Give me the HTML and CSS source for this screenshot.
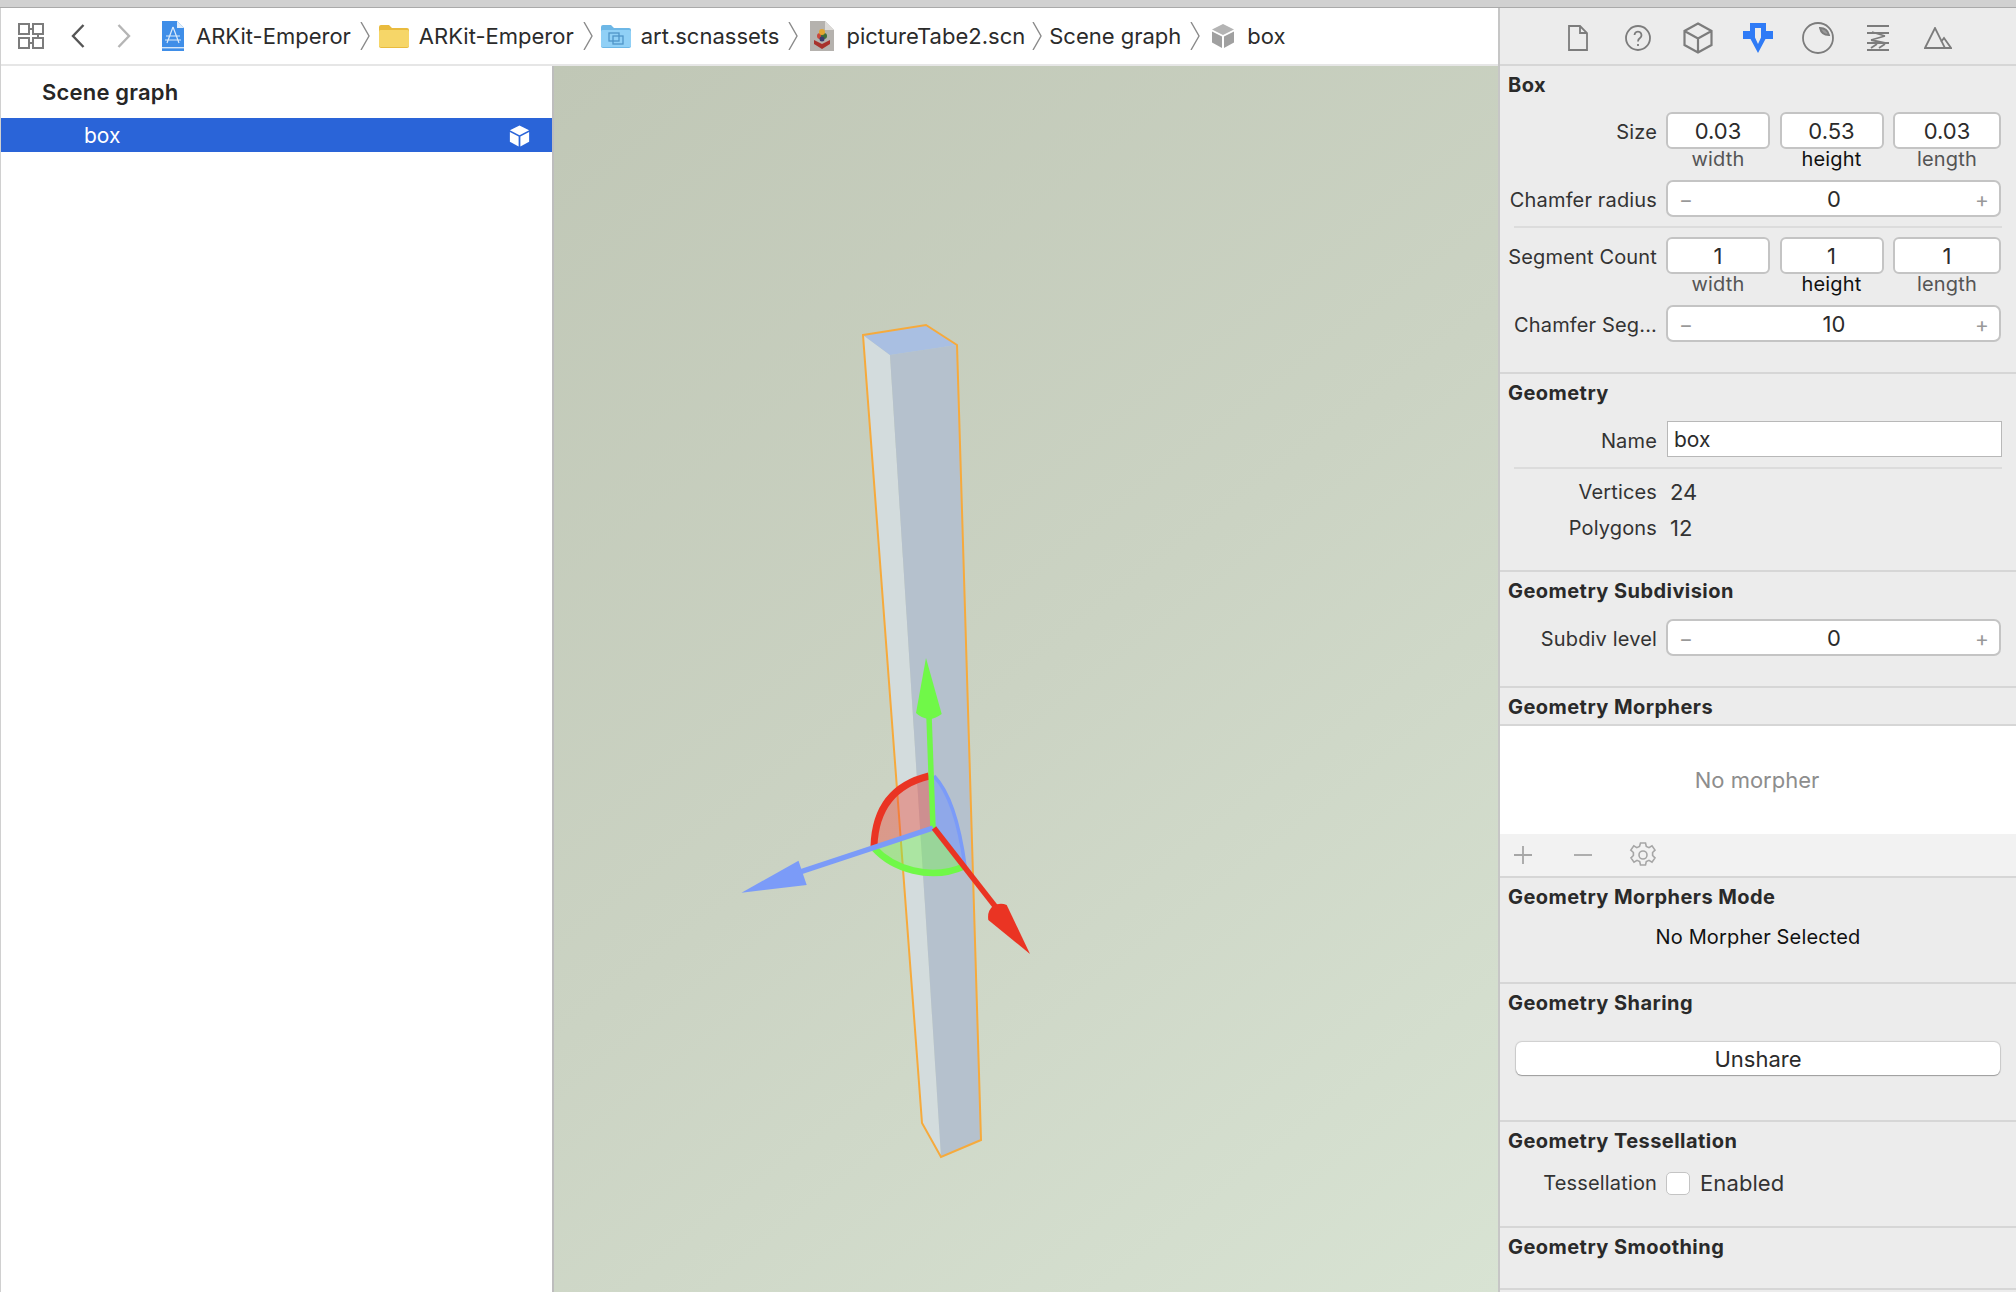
FILE: index.html
```html
<!DOCTYPE html>
<html lang="en">
<head>
<meta charset="utf-8">
<title>Scene editor</title>
<link rel="stylesheet" href="styles.css">
</head>
<body>
<div class="window">
  <div class="titlestrip"></div>
  <div class="body">
    <div class="editor">
      <div class="toolbar">
        <svg class="ic-grid" width="26" height="26" viewBox="0 0 26 26" fill="none" stroke="#7c7c7c" stroke-width="2"><rect x="1" y="1" width="10" height="10"/><rect x="15" y="1" width="10" height="10"/><rect x="1" y="15" width="10" height="10"/><rect x="15" y="15" width="10" height="10"/><path d="M11 6h5M20 11v5M15 20h-4"/></svg>
        <svg class="ic-back" width="14" height="24" viewBox="0 0 14 24" fill="none" stroke="#555" stroke-width="2.4"><path d="M12.5 1 2 12l10.5 11"/></svg>
        <svg class="ic-fwd" width="14" height="24" viewBox="0 0 14 24" fill="none" stroke="#b5b5b5" stroke-width="2.4"><path d="M1.5 1 12 12 1.5 23"/></svg>
        <nav class="crumbs">
          <svg class="ci-app" width="23" height="30" viewBox="0 0 23 30"><path d="M1 0h15l7 7v23H1z" fill="#3f8ee8"/><path d="M16 0l7 7h-7z" fill="#e4effa"/><path d="M1 26h22v1.4H1z" fill="#d5e6f8"/><path d="M12 6 6 22M12 6l6 16M5 15h14M4 19h16" stroke="#dcebfa" stroke-width="1.2" fill="none"/></svg>
          <span class="crumb-text">ARKit-Emperor</span>
          <svg class="sep" width="10" height="28" viewBox="0 0 10 28" fill="none" stroke="#8a8a8a" stroke-width="1.4"><path d="M1 0l8 14-8 14"/></svg>
          <svg class="ci-folder" width="30" height="24" viewBox="0 0 30 24"><path d="M0 3a2 2 0 0 1 2-2h8l3 3h15a2 2 0 0 1 2 2v16a2 2 0 0 1-2 2H2a2 2 0 0 1-2-2z" fill="#e9bb3e"/><rect y="6" width="30" height="17" rx="1.5" fill="#f6d668"/></svg>
          <span class="crumb-text">ARKit-Emperor</span>
          <svg class="sep" width="10" height="28" viewBox="0 0 10 28" fill="none" stroke="#8a8a8a" stroke-width="1.4"><path d="M1 0l8 14-8 14"/></svg>
          <svg class="ci-folder ci-folder-art" width="30" height="24" viewBox="0 0 30 24"><path d="M0 3a2 2 0 0 1 2-2h8l3 3h15a2 2 0 0 1 2 2v16a2 2 0 0 1-2 2H2a2 2 0 0 1-2-2z" fill="#6db7e6"/><rect y="6" width="30" height="17" rx="1.5" fill="#90d0f6"/><g fill="none" stroke="#4f94c8" stroke-width="1.3"><rect x="8" y="9" width="10" height="8"/><rect x="12" y="12" width="10" height="8"/></g></svg>
          <span class="crumb-text">art.scnassets</span>
          <svg class="sep" width="10" height="28" viewBox="0 0 10 28" fill="none" stroke="#8a8a8a" stroke-width="1.4"><path d="M1 0l8 14-8 14"/></svg>
          <svg class="ci-scn" width="24" height="30" viewBox="0 0 24 30"><path d="M0 0h15l9 9v21H0z" fill="#b5b2ae"/><path d="M15 0l9 9h-9z" fill="#dcdad7"/><path d="M4 19l8 4 8-4v4l-8 5-8-5z" fill="#a8322c"/><circle cx="10" cy="15" r="3" fill="#c9473d"/><circle cx="14" cy="15" r="3" fill="#3f6e3a"/><circle cx="12" cy="11" r="3" fill="#e2a52f"/><circle cx="12" cy="18" r="2.5" fill="#3b3a6d"/></svg>
          <span class="crumb-text">pictureTabe2.scn</span>
          <svg class="sep sep-tight" width="10" height="28" viewBox="0 0 10 28" fill="none" stroke="#8a8a8a" stroke-width="1.4"><path d="M1 0l8 14-8 14"/></svg>
          <span class="crumb-text crumb-plain">Scene graph</span>
          <svg class="sep" width="10" height="28" viewBox="0 0 10 28" fill="none" stroke="#8a8a8a" stroke-width="1.4"><path d="M1 0l8 14-8 14"/></svg>
          <svg class="ci-cube" width="24" height="24" viewBox="0 0 24 24"><path d="M12 0 23 5.5 12 11 1 5.5z" fill="#b4b4b4"/><path d="M1 7.5 11 12.5V24L1 18.5z" fill="#a0a0a0"/><path d="M23 7.5 13 12.5V24l10-5.5z" fill="#a0a0a0"/></svg>
          <span class="crumb-text">box</span>
        </nav>
      </div>
      <div class="split">
        <aside class="outline">
          <div class="outline-title">Scene graph</div>
          <div class="outline-row">
            <span>box</span>
            <svg width="21" height="22" viewBox="0 0 24 24"><path d="M12 0 23 5.5 12 11 1 5.5z" fill="#fff"/><path d="M1 7.5 11 12.5V24L1 18.5z" fill="#fff"/><path d="M23 7.5 13 12.5V24l10-5.5z" fill="#fff"/></svg>
          </div>
        </aside>
        <main class="viewport">
          <svg class="scene" viewBox="554 66 944 1226" width="944" height="1226">
            <polygon points="863,335 890,355 941,1157 922,1123" fill="#d3dcdd"/>
            <polygon points="890,355 957,345 981,1140 941,1157" fill="#b5c1cd"/>
            <polygon points="863,335 926,325 957,345 890,355" fill="#a9bfe2"/>
            <polygon points="863,335 926,325 957,345 981,1140 941,1157 922,1123" fill="none" stroke="#f6aa3c" stroke-width="2"/>
            <path d="M933 828 929 776Q876 789 874 846Z" fill="#ee4a3c" fill-opacity=".42"/>
            <path d="M933 828 874 848C892 868 930 882 965 866Z" fill="#70f24a" fill-opacity=".4"/>
            <path d="M933 828 934 776Q956 799 965 866Z" fill="#7b9bf8" fill-opacity=".65"/>
            <path d="M934 776Q956 799 965 866" fill="none" stroke="#7b9bf8" stroke-width="3.5"/>
            <path d="M874 848C892 868 930 882 965 866" fill="none" stroke="#70f848" stroke-width="6.5"/>
            <path d="M929 776Q876 789 874 846" fill="none" stroke="#ea3423" stroke-width="7"/>
            <path d="M933 828 929 716" stroke="#70f848" stroke-width="5.5"/>
            <path d="M926 658 941.700 714Q935 719 929 719 921 718 916 713Z" fill="#70f848"/>
            <path d="M933 828 800 872" stroke="#7b9bf8" stroke-width="5.5"/>
            <path d="M741.500 892.700 798.500 860.700 806.700 885Z" fill="#7b9bf8"/>
            <path d="M934 828 998 910" stroke="#ea3423" stroke-width="5.5"/>
            <path d="M1030 954 988.300 920Q987 911 993 906 1000 902 1006.700 905Z" fill="#ea3423"/>
          </svg>
        </main>
      </div>
    </div>

    <aside class="inspector">
      <div class="tabs">
        <svg width="20" height="26" viewBox="0 0 20 26" fill="none" stroke="#7c7c7c" stroke-width="1.8"><path d="M1 1h11l7 7v17H1zM12 1v7h7"/></svg>
        <svg width="26" height="26" viewBox="0 0 26 26" fill="none" stroke="#7c7c7c" stroke-width="1.8"><circle cx="13" cy="13" r="12"/><path d="M9.500 10a3.500 3.500 0 1 1 5.500 3c-1.500 1-2 1.500-2 3.500"/><path d="M13 19v2"/></svg>
        <svg width="30" height="32" viewBox="0 0 30 32" fill="none" stroke="#7c7c7c" stroke-width="2.200"><path d="M15 1.500 28.500 9v14L15 30.500 1.500 23V9zM1.500 9 15 16.500 28.500 9M15 16.500v14"/></svg>
        <svg width="30" height="30" viewBox="0 0 30 30"><path fill-rule="evenodd" d="M7 0h16v8h7v8h-7.500L15 30 7.500 16H0V8h7zM12 5v9.500L15 21l3-6.500V5z" fill="#2f7bf6"/></svg>
        <svg width="32" height="32" viewBox="0 0 32 32" fill="none" stroke="#7c7c7c" stroke-width="1.800"><circle cx="16" cy="16" r="15"/><path d="M18 6c5 0 8 3 9 7-5 0-8-2-9-7z" fill="#9a9a9a"/></svg>
        <svg width="22" height="26" viewBox="0 0 22 26" fill="none" stroke="#7c7c7c" stroke-width="1.800"><path d="M0 1h22M0 25h22M0 8h22M0 18h22M5 7l13 4M18 11 4 15M4 15l14 3M4 23l6-4M12 23l6-4"/></svg>
        <svg width="28" height="22" viewBox="0 0 28 22" fill="none" stroke="#7c7c7c" stroke-width="1.800"><path d="M1 21 11 1l10 20zM1 21h26l-7-10-3 4"/></svg>
      </div>

      <section class="sec sec-box">
        <h2>Box</h2>
        <div class="row row-size">
          <label>Size</label>
          <div class="triple">
            <div class="cell"><div class="num">0.03</div><small>width</small></div>
            <div class="cell"><div class="num">0.53</div><small class="on">height</small></div>
            <div class="cell"><div class="num">0.03</div><small>length</small></div>
          </div>
        </div>
        <div class="row row-chamfer">
          <label>Chamfer radius</label>
          <div class="stepper"><i>−</i><b>0</b><i>+</i></div>
        </div>
        <hr class="rule rule-a">
        <div class="row">
          <label>Segment Count</label>
          <div class="triple">
            <div class="cell"><div class="num">1</div><small>width</small></div>
            <div class="cell"><div class="num">1</div><small class="on">height</small></div>
            <div class="cell"><div class="num">1</div><small>length</small></div>
          </div>
        </div>
        <div class="row row-chamfer">
          <label>Chamfer Seg...</label>
          <div class="stepper"><i>−</i><b>10</b><i>+</i></div>
        </div>
      </section>

      <section class="sec sec-geo">
        <h2>Geometry</h2>
        <div class="row row-name">
          <label>Name</label>
          <div class="namefield">box</div>
        </div>
        <hr class="rule rule-b">
        <div class="row row-stat"><label>Vertices</label><span>24</span></div>
        <div class="row row-stat"><label>Polygons</label><span>12</span></div>
      </section>

      <section class="sec sec-sub">
        <h2>Geometry Subdivision</h2>
        <div class="row row-name">
          <label>Subdiv level</label>
          <div class="stepper"><i>−</i><b>0</b><i>+</i></div>
        </div>
      </section>

      <section class="sec sec-morph">
        <h2>Geometry Morphers</h2>
      </section>
      <div class="morph-list">No morpher</div>
      <div class="morph-tools">
        <svg width="20" height="20" viewBox="0 0 20 20" stroke="#a6a6a6" stroke-width="1.800"><path d="M10 1v18M1 10h18"/></svg>
        <svg width="20" height="20" viewBox="0 0 20 20" stroke="#a6a6a6" stroke-width="1.800"><path d="M1 10h18"/></svg>
        <svg width="28" height="28" viewBox="0 0 28 28" fill="none" stroke="#a6a6a6" stroke-width="1.600"><path d="M11.500 2h5l.8 3.500 2.700 1.200 3-1.800 3 4.200-2.400 2.400v3l2.400 2.400-3 4.200-3-1.800-2.700 1.200-.8 3.500h-5l-.8-3.500-2.700-1.200-3 1.800-3-4.200 2.400-2.400v-3L1.800 9.100l3-4.200 3 1.800 2.700-1.200z"/><circle cx="14" cy="14" r="4"/></svg>
      </div>

      <section class="sec sec-mode">
        <h2>Geometry Morphers Mode</h2>
        <p class="center-note">No Morpher Selected</p>
      </section>

      <section class="sec sec-share">
        <h2>Geometry Sharing</h2>
        <button class="btn">Unshare</button>
      </section>

      <section class="sec sec-tess">
        <h2>Geometry Tessellation</h2>
        <div class="row row-check">
          <label>Tessellation</label>
          <span class="checkbox"></span>
          <span class="check-label">Enabled</span>
        </div>
      </section>

      <section class="sec sec-smooth">
        <h2>Geometry Smoothing</h2>
      </section>
    </aside>
  </div>
</div>
</body>
</html>
```

FILE: styles.css
```css
* { box-sizing: border-box; }
html, body { margin: 0; height: 100%; }
body {
  width: 2016px;
  height: 1292px;
  overflow: hidden;
  font-family: Inter, "Liberation Sans", sans-serif;
  color: #2b2b2b;
  background: #ececec;
}
.window { display: flex; flex-direction: column; height: 1292px; }
.titlestrip { height: 8px; background: #d1d1d1; border-bottom: 1px solid #aaa; flex: none; }
.body { display: flex; flex: 1; min-height: 0; }

.editor { width: 1498px; display: flex; flex-direction: column; flex: none; border-left: 1px solid #d0d0d0; }
.toolbar {
  height: 58px;
  flex: none;
  background: #fff;
  border-bottom: 2px solid #e6e6e6;
  display: flex;
  align-items: center;
  padding-left: 17px;
}
.ic-back { margin-left: 27px; }
.ic-fwd { margin-left: 32px; }
.crumbs { display: flex; align-items: center; margin-left: 30px; }
.crumb-text { font-size: 22px; line-height: 28px; color: #2b2b2b; white-space: nowrap; margin-left: 12px; }
.ci-folder + .crumb-text { margin-left: 10px; }
.crumb-text.crumb-plain { margin-left: 7px; }
.sep { margin-left: 9px; flex: none; }
.sep.sep-tight { margin-left: 7px; }
.ci-folder { margin-left: 9px; flex: none; }
.ci-folder-art { margin-left: 8px; }
.ci-scn { margin-left: 12px; flex: none; }
.ci-cube { margin-left: 11px; flex: none; }
.ci-app { flex: none; }

.split { display: flex; flex: 1; min-height: 0; }
.outline { flex: none; background: #fff; border-right: 2px solid #bdbdbd; width: 553px; }
.outline-title { font-size: 22px; font-weight: 600; line-height: 28px; margin: 12px 0 12px 41px; color: #262626; letter-spacing: 0.2px; }
.outline-row {
  height: 34px;
  background: #2a64d8;
  color: #fff;
  font-size: 21px;
  display: flex;
  align-items: center;
  justify-content: space-between;
  padding: 1px 22px 0 83px;
}
.viewport {
  flex: 1;
  min-width: 0;
  background: linear-gradient(142deg, #c0c7b6 0%, #cbd3c3 50%, #d8e3d3 100%);
  overflow: hidden;
}
.scene { display: block; }

.inspector { flex: 1; min-width: 0; border-left: 2px solid #c6c6c6; background: #ececec; display: flex; flex-direction: column; }
.tabs {
  height: 58px;
  flex: none;
  border-bottom: 2px solid #d6d6d6;
  display: grid;
  grid-template-columns: repeat(7, 60px);
  justify-items: center;
  align-items: center;
  padding-left: 48px;
  padding-top: 4px;
}

.sec { border-bottom: 2px solid #d6d6d6; padding: 0 14px 0 8px; flex: none; }
.sec h2 { margin: 0; font-size: 20px; line-height: 24px; font-weight: 700; color: #2a2a2a; letter-spacing: 0.45px; white-space: nowrap; }
.sec-box { height: 308px; padding-top: 7px; }
.sec-geo { height: 198px; padding-top: 7px; }
.sec-sub { height: 116px; padding-top: 7px; }
.sec-morph { height: 38px; padding-top: 7px; }
.sec-mode { height: 106px; padding-top: 7px; }
.sec-share { height: 138px; padding-top: 7px; }
.sec-tess { height: 106px; padding-top: 7px; }
.sec-smooth { height: 62px; padding-top: 7px; }

.row { display: flex; align-items: flex-start; font-size: 20px; }
.row > label { width: 149px; height: 37px; flex: none; margin-right: 9px; text-align: right; line-height: 41px; color: #333; letter-spacing: 0.15px; white-space: nowrap; }
.row-size { margin-top: 15px; }
.row-chamfer { margin-top: 11px; }
.row-name { margin-top: 16px; }

.triple { display: grid; grid-template-columns: 104px 104px 108px; column-gap: 9.5px; }
.cell { display: flex; flex-direction: column; align-items: center; }
.num {
  width: 100%;
  height: 37px;
  background: #fff;
  border: 2px solid #c4c4c4;
  border-radius: 6px;
  text-align: center;
  font-size: 22px;
  line-height: 35px;
  color: #2b2b2b;
}
.cell small { font-size: 20px; line-height: 21px; height: 20px; color: #555; letter-spacing: 0.2px; }
.cell small.on { color: #111; }

.stepper {
  width: 335px;
  height: 37px;
  background: #fff;
  border: 2px solid #c4c4c4;
  border-radius: 7px;
  display: flex;
  align-items: center;
  justify-content: space-between;
  padding: 1px 10px 0 11px;
}
.stepper b { font-weight: 400; font-size: 22px; color: #2b2b2b; }
.stepper i { font-style: normal; font-size: 21px; color: #999; line-height: 1; }

.rule { border: 0; height: 2px; background: #dcdcdc; margin: 0 0 0 6px; width: 488px; }
.rule-a { margin-top: 9px; margin-bottom: 9px; }
.rule-b { margin-top: 9px; margin-bottom: 5px; }

.namefield {
  width: 335px;
  height: 36px;
  margin-left: 1px;
  background: #fff;
  border: 1.500px solid #b8b8b8;
  padding-left: 6px;
  font-size: 21px;
  line-height: 35px;
  color: #2b2b2b;
}
.row-stat { height: 36px; }
.row-stat > label { height: 36px; line-height: 36px; }
.row-stat span { font-size: 22px; line-height: 36px; margin-left: 4px; color: #333; }

.morph-list { height: 108px; background: #fff; flex: none; display: flex; align-items: center; justify-content: center; font-size: 22px; color: #8d8d8d; padding: 0 2px 0 0; }
.morph-tools { height: 44px; flex: none; background: #f2f2f2; border-bottom: 2px solid #d6d6d6; display: flex; align-items: center; padding-left: 13px; }
.morph-tools svg:nth-child(2) { margin-left: 40px; }
.morph-tools svg:nth-child(3) { margin-left: 36px; }

.center-note { margin: 16px 0 0; padding-left: 6px; text-align: center; font-size: 20px; line-height: 24px; color: #111; letter-spacing: 0.15px; }
.btn {
  display: block;
  width: 484px;
  height: 33px;
  margin: 27px 0 0 8px;
  padding: 2px 0 0;
  background: #fff;
  border: 0;
  border-radius: 6px;
  box-shadow: 0 0 1px 1px rgba(0, 0, 0, .13), 0 1px 1px rgba(0, 0, 0, .25);
  font: 400 22px/31px Inter, "Liberation Sans", sans-serif;
  color: #2b2b2b;
}
.row-check { margin-top: 17px; align-items: center; }
.row-check > label { height: 24px; line-height: 24px; }
.checkbox { width: 24px; height: 23px; background: #fff; border: 1.500px solid #c4c4c4; border-radius: 5px; }
.check-label { font-size: 22px; margin-left: 10px; color: #333; letter-spacing: 0.1px; }
```
